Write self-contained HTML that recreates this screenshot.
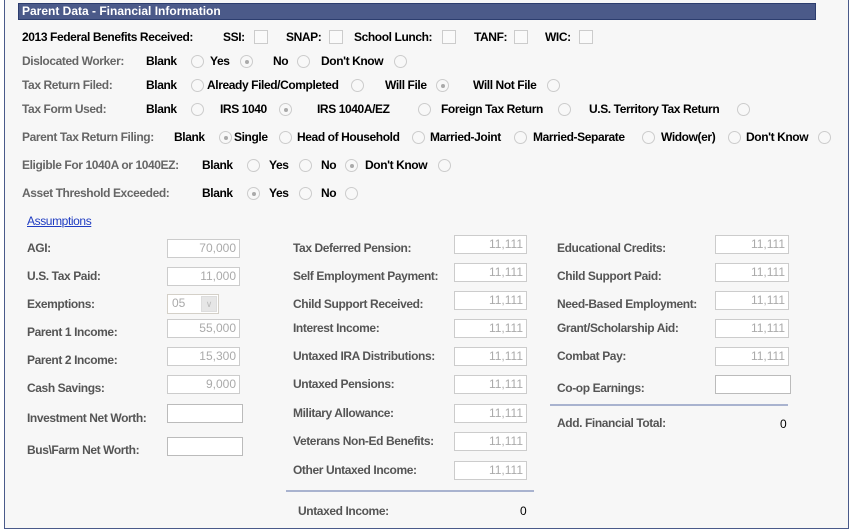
<!DOCTYPE html>
<html><head><meta charset="utf-8"><style>
*{margin:0;padding:0;box-sizing:border-box}
body{width:853px;height:532px;background:#fff;position:relative;overflow:hidden;font-family:"Liberation Sans",Arial,sans-serif;font-size:12px;font-weight:bold}
#frame{position:absolute;left:4px;top:-2px;width:845px;height:531px;border:1px solid #4a5a8a;border-top:none;background:#f7f7f7}
#hdr{position:absolute;left:18px;top:3px;width:798px;height:17px;background:#4b5a89;border:1px solid #2c3d6e;color:#fff;font-size:12px;line-height:15px;padding-left:3px}
.t{position:absolute;line-height:14px;white-space:nowrap;letter-spacing:-0.4px}
.k{color:#000}.g{color:#666}.l{color:#555}
.r{position:absolute;width:13px;height:13px;border-radius:50%;border:1px solid #ccc;background:#f8f8f8}
.r.s::after{content:"";position:absolute;left:3.5px;top:3.5px;width:4px;height:4px;border-radius:50%;background:#aaa}
.c{position:absolute;width:14px;height:14px;border:1px solid #ccc;background:#fafafa}
.i{position:absolute;height:19px;border:1px solid #ccc;background:#fff;color:#aaa;font-weight:normal;text-align:right;padding-right:3px;line-height:17px;font-size:12px}
.hr{position:absolute;height:2px;background:#a9b3cf}
</style></head><body>
<div id="frame"></div>
<div id="hdr">Parent Data - Financial Information</div>

<div class="t k" style="left:22px;top:30px">2013 Federal Benefits Received:</div>
<div class="t k" style="left:223px;top:30px">SSI:</div><div class="c" style="left:254px;top:30px"></div>
<div class="t k" style="left:286px;top:30px">SNAP:</div><div class="c" style="left:329px;top:30px"></div>
<div class="t k" style="left:354px;top:30px">School Lunch:</div><div class="c" style="left:442px;top:30px"></div>
<div class="t k" style="left:474px;top:30px">TANF:</div><div class="c" style="left:514px;top:30px"></div>
<div class="t k" style="left:545px;top:30px">WIC:</div><div class="c" style="left:579px;top:30px"></div>

<div class="t g" style="left:22px;top:54px">Dislocated Worker:</div>
<div class="t k" style="left:146px;top:54px">Blank</div><div class="r" style="left:191px;top:55px"></div>
<div class="t k" style="left:210px;top:54px">Yes</div><div class="r s" style="left:240px;top:55px"></div>
<div class="t k" style="left:273px;top:54px">No</div><div class="r" style="left:297px;top:55px"></div>
<div class="t k" style="left:321px;top:54px">Don't Know</div><div class="r" style="left:394px;top:55px"></div>

<div class="t g" style="left:22px;top:78px">Tax Return Filed:</div>
<div class="t k" style="left:146px;top:78px">Blank</div><div class="r" style="left:191px;top:79px"></div>
<div class="t k" style="left:207px;top:78px">Already Filed/Completed</div><div class="r" style="left:351px;top:79px"></div>
<div class="t k" style="left:385px;top:78px">Will File</div><div class="r s" style="left:436px;top:79px"></div>
<div class="t k" style="left:473px;top:78px">Will Not File</div><div class="r" style="left:547px;top:79px"></div>

<div class="t g" style="left:22px;top:102px">Tax Form Used:</div>
<div class="t k" style="left:146px;top:102px">Blank</div><div class="r" style="left:191px;top:103px"></div>
<div class="t k" style="left:220px;top:102px">IRS 1040</div><div class="r s" style="left:279px;top:103px"></div>
<div class="t k" style="left:317px;top:102px">IRS 1040A/EZ</div><div class="r" style="left:418px;top:103px"></div>
<div class="t k" style="left:441px;top:102px">Foreign Tax Return</div><div class="r" style="left:558px;top:103px"></div>
<div class="t k" style="left:589px;top:102px">U.S. Territory Tax Return</div><div class="r" style="left:737px;top:103px"></div>

<div class="t g" style="left:22px;top:130px">Parent Tax Return Filing:</div>
<div class="t k" style="left:174px;top:130px">Blank</div><div class="r s" style="left:219px;top:131px"></div>
<div class="t k" style="left:234px;top:130px">Single</div><div class="r" style="left:279px;top:131px"></div>
<div class="t k" style="left:297px;top:130px">Head of Household</div><div class="r" style="left:412px;top:131px"></div>
<div class="t k" style="left:430px;top:130px">Married-Joint</div><div class="r" style="left:514px;top:131px"></div>
<div class="t k" style="left:533px;top:130px">Married-Separate</div><div class="r" style="left:642px;top:131px"></div>
<div class="t k" style="left:661px;top:130px">Widow(er)</div><div class="r" style="left:728px;top:131px"></div>
<div class="t k" style="left:746px;top:130px">Don't Know</div><div class="r" style="left:818px;top:131px"></div>

<div class="t g" style="left:22px;top:158px">Eligible For 1040A or 1040EZ:</div>
<div class="t k" style="left:202px;top:158px">Blank</div><div class="r" style="left:247px;top:159px"></div>
<div class="t k" style="left:269px;top:158px">Yes</div><div class="r" style="left:299px;top:159px"></div>
<div class="t k" style="left:321px;top:158px">No</div><div class="r s" style="left:345px;top:159px"></div>
<div class="t k" style="left:365px;top:158px">Don't Know</div><div class="r" style="left:438px;top:159px"></div>

<div class="t g" style="left:22px;top:186px">Asset Threshold Exceeded:</div>
<div class="t k" style="left:202px;top:186px">Blank</div><div class="r s" style="left:247px;top:187px"></div>
<div class="t k" style="left:269px;top:186px">Yes</div><div class="r" style="left:299px;top:187px"></div>
<div class="t k" style="left:321px;top:186px">No</div><div class="r" style="left:345px;top:187px"></div>

<div class="t" style="left:27px;top:214px;color:#1f3cc2;font-weight:normal;text-decoration:underline">Assumptions</div>

<div class="t l" style="left:27px;top:241px">AGI:</div><div class="i" style="left:167px;top:239px;width:73px">70,000</div>
<div class="t l" style="left:27px;top:269px">U.S. Tax Paid:</div><div class="i" style="left:167px;top:267px;width:73px">11,000</div>
<div class="t l" style="left:27px;top:297px">Exemptions:</div>
<div class="i" style="left:167px;top:294px;width:52px;height:20px;text-align:left;padding-left:4px;border-color:#d4d0c8">05<span style="position:absolute;right:1px;top:1px;width:16px;height:16px;background:#e6e6e6;border:1px solid #ddd;color:#bbb;font-size:9px;line-height:14px;text-align:center">&#8744;</span></div>
<div class="t l" style="left:27px;top:325px">Parent 1 Income:</div><div class="i" style="left:167px;top:319px;width:73px">55,000</div>
<div class="t l" style="left:27px;top:353px">Parent 2 Income:</div><div class="i" style="left:167px;top:347px;width:73px">15,300</div>
<div class="t l" style="left:27px;top:381px">Cash Savings:</div><div class="i" style="left:167px;top:375px;width:73px">9,000</div>
<div class="t l" style="left:27px;top:411px">Investment Net Worth:</div><div class="i" style="left:167px;top:404px;width:76px;border-color:#bbb"></div>
<div class="t l" style="left:27px;top:443px">Bus\Farm Net Worth:</div><div class="i" style="left:167px;top:437px;width:76px;border-color:#bbb"></div>

<div class="t l" style="left:293px;top:241px">Tax Deferred Pension:</div><div class="i" style="left:454px;top:235px;width:73px">11,111</div>
<div class="t l" style="left:293px;top:269px">Self Employment Payment:</div><div class="i" style="left:454px;top:263px;width:73px">11,111</div>
<div class="t l" style="left:293px;top:297px">Child Support Received:</div><div class="i" style="left:454px;top:291px;width:73px">11,111</div>
<div class="t l" style="left:293px;top:321px">Interest Income:</div><div class="i" style="left:454px;top:319px;width:73px">11,111</div>
<div class="t l" style="left:293px;top:349px">Untaxed IRA Distributions:</div><div class="i" style="left:454px;top:347px;width:73px">11,111</div>
<div class="t l" style="left:293px;top:377px">Untaxed Pensions:</div><div class="i" style="left:454px;top:375px;width:73px">11,111</div>
<div class="t l" style="left:293px;top:406px">Military Allowance:</div><div class="i" style="left:454px;top:404px;width:73px">11,111</div>
<div class="t l" style="left:293px;top:434px">Veterans Non-Ed Benefits:</div><div class="i" style="left:454px;top:432px;width:73px">11,111</div>
<div class="t l" style="left:293px;top:463px">Other Untaxed Income:</div><div class="i" style="left:454px;top:461px;width:73px">11,111</div>
<div class="hr" style="left:286px;top:490px;width:248px"></div>
<div class="t l" style="left:298px;top:504px">Untaxed Income:</div>
<div class="t k" style="left:520px;top:504px;font-weight:normal">0</div>

<div class="t l" style="left:557px;top:241px">Educational Credits:</div><div class="i" style="left:715px;top:235px;width:74px">11,111</div>
<div class="t l" style="left:557px;top:269px">Child Support Paid:</div><div class="i" style="left:715px;top:263px;width:74px">11,111</div>
<div class="t l" style="left:557px;top:297px">Need-Based Employment:</div><div class="i" style="left:715px;top:291px;width:74px">11,111</div>
<div class="t l" style="left:557px;top:321px">Grant/Scholarship Aid:</div><div class="i" style="left:715px;top:319px;width:74px">11,111</div>
<div class="t l" style="left:557px;top:349px">Combat Pay:</div><div class="i" style="left:715px;top:347px;width:74px">11,111</div>
<div class="t l" style="left:557px;top:381px">Co-op Earnings:</div><div class="i" style="left:715px;top:375px;width:76px;border-color:#bbb"></div>
<div class="hr" style="left:550px;top:404px;width:238px"></div>
<div class="t l" style="left:557px;top:416px">Add. Financial Total:</div>
<div class="t k" style="left:780px;top:417px;font-weight:normal">0</div>
</body></html>
